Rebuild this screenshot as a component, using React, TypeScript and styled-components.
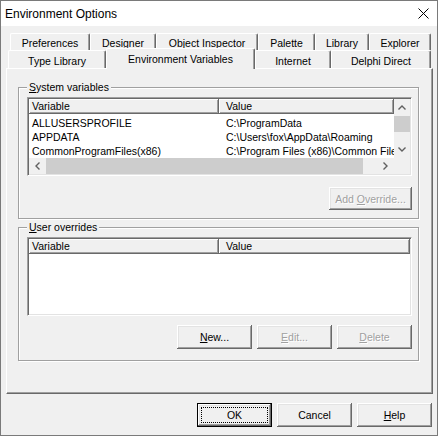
import styled, { createGlobalStyle } from 'styled-components';

const GlobalStyle = createGlobalStyle`
  body {
    margin: 0;
    background: #ffffff;
  }
  * {
    box-sizing: border-box;
  }
`;

const uiFont = `"Liberation Sans", Arial, sans-serif`;

const Window = styled.div`
  width: 438px;
  height: 436px;
  border: 1px solid #7a7a7a;
  display: flex;
  flex-direction: column;
  font-family: ${uiFont};
  font-size: 10.5px;
  color: #000;
`;

const TitleBar = styled.div`
  height: 25px;
  background: #ffffff;
  display: flex;
  align-items: center;
  justify-content: space-between;
  padding: 0 8px 0 4px;
  font-size: 12px;
`;

const Body = styled.div`
  flex: 1;
  background: #f0f0f0;
  display: flex;
  flex-direction: column;
`;

const TabStrip = styled.div`
  height: 42px;
  padding-top: 7px;
  display: flex;
  flex-direction: column;
`;

const TabRow = styled.div<{ $pl: number; $h: number }>`
  display: flex;
  align-items: flex-end;
  height: ${(p) => p.$h}px;
  padding-left: ${(p) => p.$pl}px;
`;

const Tab = styled.div<{ $w: number; $active?: boolean; $pt: number }>`
  width: ${(p) => p.$w}px;
  height: ${(p) => (p.$active ? '21px' : '100%')};
  margin-bottom: ${(p) => (p.$active ? '-1px' : '0')};
  position: relative;
  z-index: ${(p) => (p.$active ? 2 : 1)};
  background: #f0f0f0;
  border-top: 1px solid #ffffff;
  border-left: 1px solid #ffffff;
  border-right: 1px solid #696969;
  box-shadow: inset -1px 0 #a0a0a0;
  border-radius: 2px 2px 0 0;
  display: flex;
  align-items: center;
  justify-content: center;
  padding-top: ${(p) => p.$pt}px;
  white-space: nowrap;
`;

const Panel = styled.div`
  margin-left: 5px;
  width: 427px;
  height: 326px;
  border-top: 1px solid #ffffff;
  border-left: 1px solid #ffffff;
  border-right: 1px solid #696969;
  border-bottom: 1px solid #696969;
  box-shadow: inset -1px -1px #a0a0a0;
  padding: 18px 13px 0 11px;
  display: flex;
  flex-direction: column;
  gap: 8px;
`;

const GroupBox = styled.div<{ $pb: number }>`
  position: relative;
  border: 1px solid #a0a0a0;
  box-shadow: 1px 1px #ffffff, inset 1px 1px #ffffff;
  padding: 9px 6px ${(p) => p.$pb}px 8px;
  display: flex;
  flex-direction: column;
`;

const GroupLabel = styled.span`
  position: absolute;
  left: 8px;
  top: -7px;
  padding: 0 2px;
  background: #f0f0f0;
  line-height: 13px;
`;

const ListView = styled.div<{ $scroll?: boolean }>`
  height: 79px;
  background: #ffffff;
  border-top: 1px solid #a0a0a0;
  border-left: 1px solid #a0a0a0;
  border-right: 1px solid #ffffff;
  border-bottom: 1px solid #ffffff;
  box-shadow: inset 1px 1px #696969, inset -1px -1px #e3e3e3;
  padding: 1px;
  display: grid;
  grid-template-columns: ${(p) => (p.$scroll ? '1fr 16px' : '1fr')};
  grid-template-rows: ${(p) => (p.$scroll ? '1fr 16px' : '1fr')};
  overflow: hidden;
`;

const ListContent = styled.div`
  overflow: hidden;
  min-width: 0;
`;

const Header = styled.div`
  display: flex;
  height: 15px;
`;

const HeaderCell = styled.div<{ $w?: number; $pl: number }>`
  ${(p) => (p.$w ? `width: ${p.$w}px; flex: none;` : 'flex: 1;')}
  height: 15px;
  line-height: 14px;
  padding-left: ${(p) => p.$pl}px;
  background: #f0f0f0;
  box-shadow: inset -1px -1px #696969, inset 1px 1px #ffffff, inset -2px -2px #a0a0a0;
  white-space: nowrap;
  overflow: hidden;
`;

const Rows = styled.div`
  padding-top: 2px;
`;

const Row = styled.div`
  display: flex;
  height: 14px;
  line-height: 14px;
`;

const Cell = styled.div<{ $w?: number; $pl: number }>`
  ${(p) => (p.$w ? `width: ${p.$w}px; flex: none;` : 'flex: 1;')}
  padding-left: ${(p) => p.$pl}px;
  white-space: nowrap;
  overflow: hidden;
`;

const VScroll = styled.div`
  background: #f0f0f0;
  display: flex;
  flex-direction: column;
`;

const HScroll = styled.div`
  background: #f0f0f0;
  display: flex;
`;

const ArrowBox = styled.div`
  flex: 0 0 17px;
  display: flex;
  align-items: center;
  justify-content: center;
`;

const Thumb = styled.div<{ $size: number }>`
  flex: 0 0 ${(p) => p.$size}px;
  background: #cdcdcd;
`;

const Track = styled.div`
  flex: 1;
`;

const Corner = styled.div`
  background: #f0f0f0;
`;

const ButtonRow = styled.div<{ $mt: number; $pr?: number }>`
  display: flex;
  justify-content: flex-end;
  gap: 5px;
  margin-top: ${(p) => p.$mt}px;
  padding-right: ${(p) => p.$pr ?? 0}px;
`;

const Button = styled.button<{ $w?: number; $h?: number; $default?: boolean }>`
  width: ${(p) => p.$w ?? 75}px;
  height: ${(p) => p.$h ?? 24}px;
  padding: ${(p) => (p.$default ? '3px' : '0')};
  margin: 0;
  display: flex;
  align-items: center;
  justify-content: center;
  background: #f0f0f0;
  border: ${(p) => (p.$default ? '1px solid #000000' : 'none')};
  box-shadow: inset -1px -1px #696969, inset 1px 1px #ffffff, inset -2px -2px #a0a0a0,
    inset 2px 2px #e3e3e3;
  font-family: ${uiFont};
  font-size: 10.5px;
  color: #000;
  white-space: pre;
  &:disabled {
    color: #a0a0a0;
    text-shadow: 1px 1px #ffffff;
  }
`;

const FocusRing = styled.span`
  flex: 1;
  align-self: stretch;
  border: 1px dotted #000000;
  display: flex;
  align-items: center;
  justify-content: center;
`;

const UpArrow = () => (
  <svg width="8" height="5" viewBox="0 0 8 5">
    <polyline points="0.5,4.5 4,1 7.5,4.5" fill="none" stroke="#606060" strokeWidth="1.4" />
  </svg>
);

const DownArrow = () => (
  <svg width="8" height="5" viewBox="0 0 8 5">
    <polyline points="0.5,0.5 4,4 7.5,0.5" fill="none" stroke="#606060" strokeWidth="1.4" />
  </svg>
);

const LeftArrow = () => (
  <svg width="5" height="8" viewBox="0 0 5 8">
    <polyline points="4.5,0.5 1,4 4.5,7.5" fill="none" stroke="#606060" strokeWidth="1.4" />
  </svg>
);

const RightArrow = () => (
  <svg width="5" height="8" viewBox="0 0 5 8">
    <polyline points="0.5,0.5 4,4 0.5,7.5" fill="none" stroke="#606060" strokeWidth="1.4" />
  </svg>
);

const CloseIcon = () => (
  <svg width="11" height="11" viewBox="0 0 11 11">
    <path d="M0.5 0.5 L10.5 10.5 M10.5 0.5 L0.5 10.5" stroke="#000" strokeWidth="1" />
  </svg>
);

const backTabs = [
  { label: 'Preferences', w: 80 },
  { label: 'Designer', w: 66 },
  { label: 'Object Inspector', w: 102 },
  { label: 'Palette', w: 57 },
  { label: 'Library', w: 54 },
  { label: 'Explorer', w: 62 },
];

const frontTabs = [
  { label: 'Type Library', w: 98 },
  { label: 'Environment Variables', w: 149, active: true },
  { label: 'Internet', w: 76 },
  { label: 'Delphi Direct', w: 100 },
];

const systemVars = [
  { name: 'ALLUSERSPROFILE', value: 'C:\\ProgramData' },
  { name: 'APPDATA', value: 'C:\\Users\\fox\\AppData\\Roaming' },
  { name: 'CommonProgramFiles(x86)', value: 'C:\\Program Files (x86)\\Common Files' },
];

const App = () => {
  return (
    <>
      <GlobalStyle />
      <Window>
        <TitleBar>
          <span>Environment Options</span>
          <CloseIcon />
        </TitleBar>
        <Body>
          <TabStrip>
            <TabRow $pl={9} $h={17}>
              {backTabs.map((t) => (
                <Tab key={t.label} $w={t.w} $pt={2}>
                  {t.label}
                </Tab>
              ))}
            </TabRow>
            <TabRow $pl={7} $h={18}>
              {frontTabs.map((t) => (
                <Tab key={t.label} $w={t.w} $active={t.active} $pt={t.active ? 0 : 3}>
                  {t.label}
                </Tab>
              ))}
            </TabRow>
          </TabStrip>
          <Panel>
            <GroupBox $pb={8}>
              <GroupLabel>
                <u>S</u>ystem variables
              </GroupLabel>
              <ListView $scroll>
                <ListContent>
                  <Header>
                    <HeaderCell $w={190} $pl={3}>
                      Variable
                    </HeaderCell>
                    <HeaderCell $pl={7}>Value</HeaderCell>
                  </Header>
                  <Rows>
                    {systemVars.map((v) => (
                      <Row key={v.name}>
                        <Cell $w={190} $pl={3}>
                          {v.name}
                        </Cell>
                        <Cell $pl={7}>{v.value}</Cell>
                      </Row>
                    ))}
                  </Rows>
                </ListContent>
                <VScroll>
                  <ArrowBox>
                    <UpArrow />
                  </ArrowBox>
                  <Thumb $size={16} />
                  <Track />
                  <ArrowBox>
                    <DownArrow />
                  </ArrowBox>
                </VScroll>
                <HScroll>
                  <ArrowBox>
                    <LeftArrow />
                  </ArrowBox>
                  <Thumb $size={317} />
                  <Track />
                  <ArrowBox>
                    <RightArrow />
                  </ArrowBox>
                </HScroll>
                <Corner />
              </ListView>
              <ButtonRow $mt={11}>
                <Button $w={83} $h={23} disabled>
                  <span>
                    Add <u>O</u>verride...
                  </span>
                </Button>
              </ButtonRow>
            </GroupBox>
            <GroupBox $pb={11}>
              <GroupLabel>
                <u>U</u>ser overrides
              </GroupLabel>
              <ListView>
                <ListContent>
                  <Header>
                    <HeaderCell $w={190} $pl={3}>
                      Variable
                    </HeaderCell>
                    <HeaderCell $pl={7}>Value</HeaderCell>
                  </Header>
                </ListContent>
              </ListView>
              <ButtonRow $mt={9}>
                <Button>
                  <span>
                    <u>N</u>ew...
                  </span>
                </Button>
                <Button disabled>
                  <span>
                    <u>E</u>dit...
                  </span>
                </Button>
                <Button disabled>
                  <span>
                    <u>D</u>elete
                  </span>
                </Button>
              </ButtonRow>
            </GroupBox>
          </Panel>
          <ButtonRow $mt={9} $pr={5}>
            <Button $default>
              <FocusRing>OK</FocusRing>
            </Button>
            <Button>Cancel</Button>
            <Button>
              <span>
                <u>H</u>elp
              </span>
            </Button>
          </ButtonRow>
        </Body>
      </Window>
    </>
  );
};

export default App;
